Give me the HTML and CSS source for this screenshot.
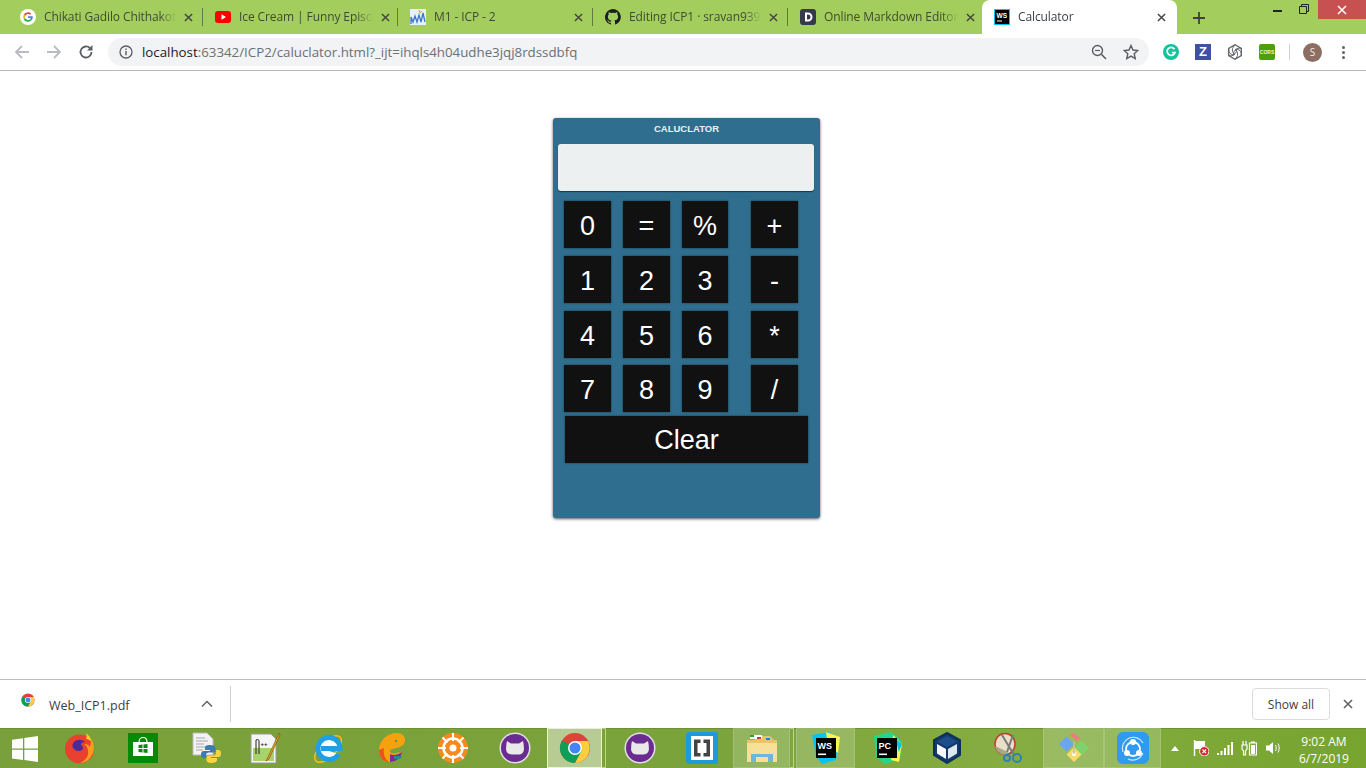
FILE: index.html
```html
<!DOCTYPE html>
<html lang="en">
<head>
  <meta charset="UTF-8">
  <title>Calculator</title>
  <link rel="stylesheet" href="styles.css">
</head>
<body>

  <svg class="defs" width="0" height="0">
    <symbol id="x" viewBox="0 0 10 10"><path d="M1 1l8 8M9 1l-8 8" fill="none" stroke="currentColor" stroke-width="1.6"/></symbol>
    <symbol id="chrome" viewBox="0 0 32 32">
      <circle cx="16" cy="16" r="15" fill="#db4437"/>
      <path d="M16 16L3 8.5A15 15 0 0 0 16 31l7.5-13z" fill="#0f9d58"/>
      <path d="M16 9h13a15 15 0 0 1-13 22l7-13z" fill="#ffcd40"/>
      <circle cx="16" cy="16" r="7" fill="#fff"/>
      <circle cx="16" cy="16" r="5.5" fill="#4285f4"/>
    </symbol>
    <symbol id="cat" viewBox="0 0 32 32">
      <circle cx="16" cy="16" r="15.5" fill="#e4dfe8"/>
      <circle cx="16" cy="16" r="14" fill="#6a2c91"/>
      <path d="M8 9l4 2.500h8l4-2.500c.6 2 .8 4 .8 6 .8 4.500-1.500 7.500-5.500 7.500h-6.600c-4 0-6.300-3-5.500-7.500 0-2 .2-4 .8-6z" fill="#e9e9e9"/>
    </symbol>
  </svg>

  <div class="tabstrip">
    <div class="tab">
      <svg class="favicon" viewBox="0 0 16 16"><circle cx="8" cy="8" r="8" fill="#fff"/><path d="M8 3.2a4.8 4.8 0 0 1 3.2 1.2l-1.2 1.3A3 3 0 0 0 5.2 7L3.7 5.8A4.8 4.8 0 0 1 8 3.2z" fill="#ea4335"/><path d="M3.7 5.8L5.2 7a3 3 0 0 0 0 2L3.7 10.200a4.800 4.800 0 0 1 0-4.400z" fill="#fbbc05"/><path d="M3.700 10.200L5.200 9a3 3 0 0 0 4.600 1.400l1.400 1.200A4.800 4.800 0 0 1 3.700 10.200z" fill="#34a853"/><path d="M12.800 8c0 1.500-.6 2.700-1.600 3.600L9.800 10.400c.5-.4.800-.8 1-1.400H8V7.200h4.700z" fill="#4285f4"/></svg>
      <span class="tab-title">Chikati Gadilo Chithakot</span>
      <svg class="tab-x"><use href="#x"/></svg>
    </div>
    <div class="tab">
      <svg class="favicon" viewBox="0 0 16 16"><rect y="2" width="16" height="12" rx="3" fill="#f00"/><path d="M6.500 5.200v5.600L11 8z" fill="#fff"/></svg>
      <span class="tab-title">Ice Cream | Funny Episo</span>
      <svg class="tab-x"><use href="#x"/></svg>
    </div>
    <div class="tab">
      <svg class="favicon" viewBox="0 0 16 16"><rect width="16" height="16" fill="#e8f0fa"/><path d="M1 15V8l2 5 2-6 2 6 2-7 2 7 2-9 2 9" fill="none" stroke="#3b78c9" stroke-width="1.300"/><path d="M9 1l1 3 2-2" fill="none" stroke="#e0a030"/></svg>
      <span class="tab-title">M1 - ICP - 2</span>
      <svg class="tab-x"><use href="#x"/></svg>
    </div>
    <div class="tab">
      <svg class="favicon" viewBox="0 0 16 16"><path d="M8 0a8 8 0 0 0-2.500 15.600c.4.100.5-.2.500-.4v-1.400c-2.200.5-2.700-1-2.700-1-.4-.9-.9-1.200-.9-1.200-.7-.5.100-.5.100-.5.800.1 1.200.8 1.200.8.700 1.200 1.900.9 2.300.7.100-.5.300-.9.500-1.100-1.800-.2-3.600-.9-3.600-4 0-.9.300-1.600.8-2.100-.1-.2-.4-1 .1-2.100 0 0 .7-.2 2.200.8a7.600 7.600 0 0 1 4 0c1.500-1 2.200-.8 2.200-.8.400 1.100.2 1.900.1 2.100.5.600.8 1.300.8 2.100 0 3.100-1.900 3.700-3.700 3.900.3.300.6.700.6 1.500v2.200c0 .2.100.5.600.4A8 8 0 0 0 8 0z" fill="#1b1f23"/></svg>
      <span class="tab-title">Editing ICP1 · sravan939</span>
      <svg class="tab-x"><use href="#x"/></svg>
    </div>
    <div class="tab tab-last">
      <svg class="favicon" viewBox="0 0 16 16"><rect width="16" height="16" rx="3" fill="#35394a"/><path d="M5 3.500h3a4.500 4.500 0 0 1 0 9H5zm2 2v5h1a2.500 2.500 0 0 0 0-5z" fill="#fff"/></svg>
      <span class="tab-title">Online Markdown Editor</span>
      <svg class="tab-x"><use href="#x"/></svg>
    </div>
    <div class="tab tab-active">
      <svg class="favicon" viewBox="0 0 16 16"><rect width="16" height="16" fill="#07c3f2"/><rect x="1" y="1" width="14" height="14" fill="#000"/><rect x="3" y="11.500" width="5" height="1" fill="#fff"/><text x="2.500" y="8.500" class="ws-mini">WS</text></svg>
      <span class="tab-title">Calculator</span>
      <svg class="tab-x"><use href="#x"/></svg>
    </div>
    <svg class="new-tab" viewBox="0 0 12 12"><path d="M6 0v12M0 6h12" stroke="#3c4043" stroke-width="1.800"/></svg>
    <div class="win-controls">
      <span class="win-min"></span>
      <svg class="win-restore" viewBox="0 0 10 10"><path d="M2.500 2.500V.5h7v7h-2M.5 2.500h7v7h-7z" fill="none" stroke="#222"/></svg>
      <span class="win-close"><svg viewBox="0 0 10 10"><path d="M1 1l8 8M9 1l-8 8" stroke="#fff" stroke-width="1.500"/></svg></span>
    </div>
  </div>

  <div class="toolbar">
    <svg class="nav-icon" viewBox="0 0 16 16"><path d="M15 8H2M8 2L2 8l6 6" fill="none" stroke="#b9bcc0" stroke-width="1.800"/></svg>
    <svg class="nav-icon" viewBox="0 0 16 16"><path d="M1 8h13M8 2l6 6-6 6" fill="none" stroke="#b9bcc0" stroke-width="1.800"/></svg>
    <svg class="nav-icon" viewBox="0 0 16 16"><path d="M13.500 8A5.500 5.500 0 1 1 12 4.200" fill="none" stroke="#5a5d61" stroke-width="1.800"/><path d="M14.500 1v5.500H9z" fill="#5a5d61"/></svg>
    <div class="omnibox">
      <svg class="omni-icon" viewBox="0 0 14 14"><circle cx="7" cy="7" r="6" fill="none" stroke="#5a5d61" stroke-width="1.300"/><path d="M7 6v4.200M7 3.600v1.400" stroke="#5a5d61" stroke-width="1.400"/></svg>
      <span class="url"><span class="url-host">localhost</span>:63342/ICP2/caluclator.html?_ijt=ihqls4h04udhe3jqj8rdssdbfq</span>
      <svg class="omni-zoom" viewBox="0 0 16 16"><circle cx="6.500" cy="6.500" r="5" fill="none" stroke="#5a5d61" stroke-width="1.400"/><path d="M10.300 10.300L15 15" stroke="#5a5d61" stroke-width="1.600"/><path d="M4 6.500h5" stroke="#5a5d61" stroke-width="1.200"/></svg>
      <svg class="omni-star" viewBox="0 0 16 16"><path d="M8 1.500l2 4.500 4.800.5-3.600 3.200 1 4.800L8 12.100l-4.200 2.400 1-4.800L1.200 6.500 6 6z" fill="none" stroke="#5a5d61" stroke-width="1.400"/></svg>
    </div>
    <div class="extensions">
      <svg class="ext" viewBox="0 0 16 16"><circle cx="8" cy="8" r="8" fill="#15c39a"/><path d="M11.500 5.200A4 4 0 1 0 12 8.500H8.800" fill="none" stroke="#fff" stroke-width="1.700"/></svg>
      <span class="ext ext-z">Z</span>
      <svg class="ext" viewBox="0 0 16 16"><path d="M8 .8l6.300 3.600v7.200L8 15.200l-6.300-3.600V4.400z" fill="none" stroke="#5f6368" stroke-width="1.300"/><path d="M8 .8C4.500 4 4.500 8 8 10.500M14.300 4.400C10 3.500 6.500 6 6.500 10.500M14.300 11.600C15 7.500 12 4.500 8 5.500M8 15.200c3.500-3 3.500-7 0-9.700M1.700 11.600c4.300 1 7.800-1.600 7.800-6M1.700 4.400C1 8.500 4 11.500 8 10.500" fill="none" stroke="#5f6368"/></svg>
      <span class="ext ext-cors">CORS</span>
      <span class="ext-sep"></span>
      <span class="avatar">S</span>
      <span class="dots"><i></i><i></i><i></i></span>
    </div>
  </div>

  <main class="page">
    <div class="calc">
      <h1 class="calc-title">Caluclator</h1>
      <div class="calc-display"></div>
      <div class="calc-keys">
        <button class="key">0</button>
        <button class="key">=</button>
        <button class="key key-narrow">%</button>
        <button class="key">+</button>
        <button class="key">1</button>
        <button class="key">2</button>
        <button class="key key-narrow">3</button>
        <button class="key">-</button>
        <button class="key">4</button>
        <button class="key">5</button>
        <button class="key key-narrow">6</button>
        <button class="key">*</button>
        <button class="key">7</button>
        <button class="key">8</button>
        <button class="key key-narrow">9</button>
        <button class="key">/</button>
      </div>
      <button class="key key-clear">Clear</button>
    </div>
  </main>

  <div class="download-bar">
    <div class="download-item">
      <svg class="download-icon"><use href="#chrome"/></svg>
      <span class="download-name">Web_ICP1.pdf</span>
      <svg class="download-caret" viewBox="0 0 12 8"><path d="M1 6.500l5-5 5 5" fill="none" stroke="#5f6368" stroke-width="1.500"/></svg>
    </div>
    <button class="show-all">Show all</button>
    <svg class="download-x"><use href="#x"/></svg>
  </div>

  <div class="taskbar">
    <div class="task">
      <svg class="task-win" viewBox="0 0 26 26"><path d="M0 3.700l11-1.500v10.300H0zM12.300 2L26 0v12.500H12.300zM0 13.800h11v10.300L0 22.500zM12.300 13.800H26V26l-13.700-1.900z" fill="#fff"/></svg>
    </div>
    <div class="task">
      <svg class="task-icon" viewBox="0 0 32 32"><circle cx="15.500" cy="17" r="14.500" fill="#e8412f"/><path d="M28 8c2.500 5 2.500 11 0 15-2.500 5-7 8-12 8 6-3 9-7 8-13-.5-3-2-5-4-6 3 0 5 1 6 3 .5-2 .5-5 2-7z" fill="#ff9a1f"/><path d="M22 1c2.500 2 5 5 6 9-2-2-4-3-6-3 1-2 1-4 0-6z" fill="#ffcb2e"/><path d="M10 10c3-3 8-3 11 0-3 0-4 1-4 3 2 1 3 3 1 5-3 2-7 1-9-2-1-2-.5-4 1-6z" fill="#4b2a9a"/></svg>
    </div>
    <div class="task">
      <svg class="task-icon task-store" viewBox="0 0 30 30"><rect width="30" height="30" fill="#038a09"/><path d="M5 9h20v14H5z" fill="#fff"/><path d="M11 9c0-6 8-6 8 0" fill="none" stroke="#fff" stroke-width="1.200"/><path d="M10.500 12l4-.5v3.500h-4zM15.500 11.500l4-.5v4h-4zM10.500 16h4v3.500l-4-.5zM15.500 16h4v4l-4-.5z" fill="#038a09"/></svg>
    </div>
    <div class="task">
      <svg class="task-icon" viewBox="0 0 32 32"><path d="M3 1h14l6 6v16H3z" fill="#f2f2f2" stroke="#bbb"/><path d="M6 6h9M6 9h12M6 12h8M6 15h10M6 18h7" stroke="#a9a9a9"/><path d="M20 13c-4 0-5 1-5 3v2h5v1h-6c-2 0-3 1-3 3.500S12 26 14 26h2v-3c0-1.500 1-2.500 3-2.500h4c1.500 0 2.500-1 2.500-2.500v-2c0-2-2-3-5.500-3z" fill="#3c7ab0"/><path d="M21 31c4 0 6-1 6-3v-2h-6v-1h7c2 0 3-1 3-3.500S30 18 28 18h-2v3c0 1.500-1 2.500-3 2.500h-4c-1.500 0-2.500 1-2.500 2.500v2c0 2 2 3 4.500 3z" fill="#ffd43b"/></svg>
    </div>
    <div class="task">
      <svg class="task-icon" viewBox="0 0 32 32"><path d="M2 2h20l5 5v24H2z" fill="#f5f5f5" stroke="#999"/><path d="M4 16h21v13H4z" fill="#a8d36a"/><path d="M7 8v14M7 8c2-1 3 0 3 1v13" fill="none" stroke="#222"/><text x="11.500" y="14" class="npp-mini">++</text><path d="M30 1L19 25l-2 4 3-2L31 3z" fill="#e9a320" stroke="#6b4a12" stroke-width=".6"/></svg>
    </div>
    <div class="task">
      <svg class="task-icon" viewBox="0 0 32 32"><ellipse cx="15" cy="17" rx="17" ry="8" transform="rotate(-45 15 17)" fill="none" stroke="#f0bf2a" stroke-width="1.500"/><path d="M25.500 22A11 11 0 1 1 27 16.500H8" fill="#fff" stroke="#1f9fe4" stroke-width="5"/></svg>
    </div>
    <div class="task">
      <svg class="task-icon" viewBox="0 0 32 32"><path d="M4 18C4 8 13 1 22 1c5 0 8 3 8 7 0 5-4 7-8 8-4 1-7 1-7 3 0 2 3 3 6 2l6-1c-1 6-6 10-12 10S4 26 4 18z" fill="#f6a20e"/><path d="M4 18c0 7 4 12 10 12-4-3-6-8-5-14z" fill="#e8531f"/><path d="M15 22c3 2 8 1 12-2-1 6-6 10-12 10z" fill="#7a2f98"/><path d="M19 24h8l-2 3h-6z" fill="#1d8d8f"/><circle cx="21" cy="9" r="1" fill="#1d8d8f"/></svg>
    </div>
    <div class="task">
      <svg class="task-icon" viewBox="0 0 32 32"><circle cx="16" cy="16" r="15" fill="#f58b1f"/><circle cx="16" cy="16" r="9.500" fill="none" stroke="#fff" stroke-width="2.500"/><circle cx="16" cy="16" r="3.500" fill="#fff"/><path d="M16 1v8M16 23v8M1 16h8M23 16h8M5.500 5.500l5 5M21.500 21.500l5 5M26.500 5.500l-5 5M10.500 21.500l-5 5" stroke="#fff" stroke-width="2"/></svg>
    </div>
    <div class="task">
      <svg class="task-icon"><use href="#cat"/></svg>
    </div>
    <div class="task task-open task-active task-stacked task-chrome">
      <svg class="task-icon"><use href="#chrome"/></svg>
    </div>
    <div class="task">
      <svg class="task-icon"><use href="#cat"/></svg>
    </div>
    <div class="task">
      <svg class="task-icon" viewBox="0 0 32 32"><rect width="32" height="32" rx="3" fill="#1e9ad6"/><rect x="5" y="4" width="22" height="24" fill="#fff"/><path d="M14.500 7.500H8v17h6.500v-3.500H11.500V11h3zM17.500 7.500H24v17h-6.500v-3.500h3V11h-3z" fill="#444"/></svg>
    </div>
    <div class="task task-open task-stacked task-explorer">
      <svg class="task-icon" viewBox="0 0 32 32"><path d="M1 8h8l1-4h14l4 4h3v22H1z" fill="#e9c46a"/><path d="M4 3h12v4H4z" fill="#fff"/><path d="M4 3h4v2H4z" fill="#2ba02b"/><path d="M11 5h4v2h-4z" fill="#d13438"/><path d="M20 6h4v2h-4z" fill="#0f8ad8"/><path d="M1 11h30v19H1z" fill="#f7e199"/><path d="M5 22h22v8h-5v-5H10v5H5z" fill="#6fb6dc"/></svg>
    </div>
    <div class="task task-open task-ws">
      <svg class="task-icon" viewBox="0 0 32 32"><path d="M2 3l17-3 10 6-3 22-14 4L6 24z" fill="#07c3f2"/><path d="M16 0l14 5-2 16-10-6z" fill="#fcf84a"/><rect x="6" y="6" width="20" height="20" fill="#000"/><text x="7.500" y="16.500" class="logo-mark">WS</text><rect x="8" y="21.500" width="8" height="1.600" fill="#fff"/></svg>
    </div>
    <div class="task">
      <svg class="task-icon" viewBox="0 0 32 32"><path d="M3 4l17-4 11 9-2 18-15 5-9-7z" fill="#21d789"/><path d="M22 3l9 9-3 18-8-2z" fill="#fcf84a"/><path d="M24 6l7 6-3 8z" fill="#07c3f2"/><rect x="6" y="6" width="20" height="20" fill="#000"/><text x="7.500" y="16.500" class="logo-mark">PC</text><rect x="8" y="21.500" width="8" height="1.600" fill="#fff"/></svg>
    </div>
    <div class="task">
      <svg class="task-icon" viewBox="0 0 32 32"><path d="M16 1l13 7v15l-13 8-13-8V8z" fill="#123a6b"/><path d="M16 4l10 5.500-10 5.500-10-5.500z" fill="#1d4f8c"/><path d="M6 12l9 5v10l-9-5.500z" fill="#f7f9fc"/><path d="M26 12l-9 5v10l9-5.500z" fill="#dfe7f0"/><path d="M16 1l13 7v15l-13 8-13-8V8z" fill="none" stroke="#0f3159" stroke-width="2"/></svg>
    </div>
    <div class="task">
      <svg class="task-icon" viewBox="0 0 32 32"><ellipse cx="11" cy="12" rx="10" ry="10.500" fill="#e8e0c8" stroke="#c23b32" stroke-width="1.500"/><path d="M1 14c1 6 6 9 11 9l2-3" fill="#a6a88a"/><path d="M8 3l12 20M19 3L13 20" stroke="#7a7a7a" stroke-width="2"/><circle cx="23" cy="26" r="4" fill="none" stroke="#2f7fb8" stroke-width="2"/><circle cx="13" cy="26" r="3" fill="none" stroke="#2f7fb8" stroke-width="2"/></svg>
    </div>
    <div class="task task-open">
      <svg class="task-icon" viewBox="0 0 32 32"><path d="M16 12l-7.500 7.500L1 12l7.500-7.500z" fill="#6aa5f0"/><path d="M16 16l7.500-7.500L31 16l-7.500 7.500z" fill="#7fd36a"/><path d="M8.500 22.500L16 15l7.500 7.500L16 30z" fill="#f7dc6b"/><path d="M12 3l3-2 7 5-3 3z" fill="#f27a7a"/><circle cx="16" cy="22" r="2" fill="#fff"/><path d="M16 22V10" stroke="#c9c0a0" stroke-width="1.500"/></svg>
    </div>
    <div class="task task-open task-share">
      <svg class="task-icon" viewBox="0 0 32 32"><rect width="32" height="32" rx="6" fill="#2f9bf0"/><path d="M6 20A11 11 0 0 1 26 11M26 21a11 11 0 0 1-15 6" fill="none" stroke="#cfe8fd" stroke-width="1.200"/><circle cx="16" cy="17" r="7" fill="none" stroke="#fff" stroke-width="1.800"/><circle cx="16" cy="10" r="3" fill="#fff"/><circle cx="10" cy="21" r="3" fill="#fff"/><circle cx="22" cy="21" r="3" fill="#fff"/></svg>
    </div>

    <div class="tray">
      <svg class="tray-caret" viewBox="0 0 8 5"><path d="M4 0l4 5H0z" fill="#fff"/></svg>
      <svg class="tray-icon" viewBox="0 0 16 16"><path d="M1.500 0v16" stroke="#fff" stroke-width="1.400"/><path d="M2 1h10v8H2z" fill="#fff"/><circle cx="11.300" cy="11.300" r="4.700" fill="#d9252a" stroke="#fff"/><path d="M9.500 9.500l3.600 3.600M13.100 9.500l-3.600 3.600" stroke="#fff" stroke-width="1.200"/></svg>
      <svg class="tray-icon" viewBox="0 0 16 16"><path d="M0 13h2v2H0zM3.500 11h2v4h-2zM7 8h2v7H7zM10.500 5h2v10h-2zM14 2h2v13h-2z" fill="#fff"/></svg>
      <svg class="tray-icon" viewBox="0 0 16 16"><path d="M1 5h5v4l-1.500 2v4h-2v-4L1 9zM2 1v4M5 1v4" fill="none" stroke="#fff" stroke-width="1.200"/><path d="M8.500 3h7v12h-7z" fill="none" stroke="#fff" stroke-width="1.200"/><path d="M10 1.500h4V3h-4z" fill="#fff"/><path d="M10 5h4v9h-4z" fill="#fff"/></svg>
      <svg class="tray-icon" viewBox="0 0 16 16"><path d="M1 5.500h3L8 2v12L4 10.500H1z" fill="#fff"/><path d="M10.500 5c1 2 1 4 0 6M13 3.500c1.600 3 1.600 6 0 9" fill="none" stroke="#fff"/></svg>
      <div class="clock">
        <span>9:02 AM</span>
        <span>6/7/2019</span>
      </div>
    </div>
  </div>

</body>
</html>
```

FILE: styles.css
```css
body {
  margin: 0;
  height: 768px;
  overflow: hidden;
  display: flex;
  flex-direction: column;
  background-color: #fff;
  font-family: "Open Sans", "Noto Sans", sans-serif;
  color: #3c4043;
}

.defs {
  position: absolute;
}

/* tab strip */
.tabstrip {
  height: 34px;
  display: flex;
  align-items: center;
  padding-left: 8px;
  background-color: #a3ce5e;
  flex-shrink: 0;
}

.tab {
  width: 195px;
  height: 34px;
  box-sizing: border-box;
  display: flex;
  align-items: center;
  padding: 0 10px 0 12px;
  position: relative;
}

.tab::after {
  content: "";
  position: absolute;
  right: 0;
  top: 8px;
  height: 18px;
  width: 1px;
  background-color: #5f7a3a;
}

.tab-last::after,
.tab-active::after {
  display: none;
}

.tab-active {
  background-color: #fff;
  border-radius: 8px 8px 0 0;
  margin-left: -1px;
  padding-right: 11px;
}

.favicon {
  width: 16px;
  height: 16px;
  flex-shrink: 0;
}

.ws-mini {
  font: bold 6.500px "Liberation Sans", sans-serif;
  fill: #fff;
}

.tab-title {
  flex: 1;
  margin: -1px 0 0 8px;
  font-size: 12px;
  letter-spacing: -0.1px;
  color: #3f4a33;
  white-space: nowrap;
  -webkit-mask-image: linear-gradient(to right, #000 88%, transparent);
  mask-image: linear-gradient(to right, #000 88%, transparent);
}

.tab-active .tab-title {
  color: #3c4043;
}

.tab-x {
  width: 9px;
  height: 9px;
  margin-left: 8px;
  color: #444;
  flex-shrink: 0;
}

.new-tab {
  width: 12px;
  height: 12px;
  margin-left: 16px;
  margin-top: 1px;
}

.win-controls {
  margin-left: auto;
  align-self: flex-start;
  display: flex;
  align-items: flex-start;
}

.win-min {
  width: 9px;
  height: 2px;
  margin-top: 10px;
  background-color: #222;
}

.win-restore {
  width: 10px;
  height: 10px;
  margin: 4px 9px 0 17px;
}

.win-close {
  width: 48px;
  height: 19px;
  display: flex;
  align-items: center;
  justify-content: center;
  background-color: #c75050;
}

.win-close svg {
  width: 10px;
  height: 10px;
}

/* address bar */
.toolbar {
  height: 36px;
  display: flex;
  align-items: center;
  padding-left: 14px;
  border-bottom: 1px solid #b8b8b8;
  flex-shrink: 0;
}

.nav-icon {
  width: 16px;
  height: 16px;
  margin-right: 16px;
}

.omnibox {
  width: 1041px;
  height: 28px;
  margin-left: -2px;
  display: flex;
  align-items: center;
  padding: 0 10px 0 11px;
  box-sizing: border-box;
  background-color: #f1f3f4;
  border-radius: 14px;
}

.omni-icon {
  width: 14px;
  height: 14px;
}

.url {
  flex: 1;
  margin-left: 9px;
  font-size: 13.300px;
  color: #6b7076;
  white-space: nowrap;
}

.url-host {
  color: #202124;
}

.omni-zoom,
.omni-star {
  width: 16px;
  height: 16px;
}

.omni-star {
  margin-left: 16px;
}

.extensions {
  display: flex;
  align-items: center;
  margin-left: 14px;
}

.ext {
  width: 16px;
  height: 16px;
  margin-right: 16px;
  flex-shrink: 0;
}

.ext-z {
  background-color: #3f51a5;
  color: #fff;
  font: bold 13px/16px "Liberation Sans", sans-serif;
  text-align: center;
}

.ext-cors {
  background-color: #4f9f0a;
  color: #e8f5d8;
  font: bold 5px/16px "Liberation Sans", sans-serif;
  text-align: center;
  border-radius: 2px;
}

.ext-sep {
  width: 1px;
  height: 16px;
  background-color: #d0d0d0;
  margin-left: -2px;
  margin-right: 13px;
}

.avatar {
  width: 19px;
  height: 19px;
  border-radius: 50%;
  background-color: #8d6e63;
  color: #f3ece8;
  font-size: 10px;
  line-height: 19px;
  text-align: center;
}

.dots {
  margin-left: 20px;
  display: flex;
  flex-direction: column;
  gap: 2px;
}

.dots i {
  display: block;
  width: 3px;
  height: 3px;
  border-radius: 50%;
  background-color: #5f6368;
}

/* calculator */
.page {
  flex: 1;
  padding: 47px 0 0 553px;
}

.calc {
  width: 267px;
  height: 400px;
  box-sizing: border-box;
  padding: 5px;
  background-color: #2f6e8e;
  border-radius: 3px;
  box-shadow: 0 1px 3px rgba(0, 0, 0, 0.65);
}

.calc-title {
  margin: 0;
  height: 21px;
  font: bold 9.500px/12px "Liberation Sans", Arial, sans-serif;
  text-align: center;
  text-transform: uppercase;
  color: #ecf0f1;
}

.calc-display {
  width: 256px;
  height: 47px;
  background-color: #ecf0f1;
  border-radius: 3px;
  box-shadow: 0 1px 1px rgba(0, 0, 0, 0.5);
}

.calc-keys {
  display: grid;
  grid-template-columns: 59px 59px 69px 47px;
  grid-template-rows: 55px 55px 54px 47px;
  margin: 10px 0 0 6px;
}

.key {
  width: 47px;
  height: 47px;
  padding: 3px 0 0;
  border: none;
  background-color: #111;
  color: #fff;
  font: 27px "Liberation Sans", Arial, sans-serif;
  box-shadow: 0 0 2px rgba(0, 0, 0, 0.5);
}

.key-narrow {
  width: 46px;
}

.key-clear {
  display: block;
  width: 243px;
  padding-top: 1px;
  margin: 4px 0 0 7px;
}

/* downloads */
.download-bar {
  height: 48px;
  display: flex;
  align-items: center;
  border-top: 1px solid #bdbdbd;
  flex-shrink: 0;
}

.download-item {
  width: 231px;
  height: 36px;
  box-sizing: border-box;
  display: flex;
  align-items: center;
  padding-left: 21px;
  border-right: 1px solid #d0d0d0;
}

.download-icon {
  width: 14px;
  height: 14px;
  margin-top: -8px;
}

.download-name {
  margin: 3px 0 0 14px;
  font-size: 12.500px;
  color: #3c4043;
}

.download-caret {
  width: 12px;
  height: 8px;
  margin-left: auto;
  margin-right: 17px;
}

.show-all {
  margin-left: auto;
  width: 78px;
  height: 32px;
  padding: 0;
  background-color: #fff;
  border: 1px solid #dadce0;
  border-radius: 4px;
  font: 12px "Open Sans", sans-serif;
  color: #3c4043;
}

.download-x {
  width: 10px;
  height: 10px;
  margin: 0 13px;
  color: #5f6368;
}

/* windows taskbar */
.taskbar {
  height: 40px;
  display: grid;
  grid-template-columns: 50px 60px 66px 60px 58px 70px 54px 70px 54px 64px 68px 56px 64px 63px 60px 60px 66px 61px 57px 1fr;
  background: linear-gradient(to right, #79a03a 0%, #7ba33c 50%, #86ad42 74%, #76a42e 100%);
  box-shadow: inset 0 1px 0 #6b9230;
  flex-shrink: 0;
}

.task {
  display: flex;
  align-items: center;
  justify-content: center;
  position: relative;
  box-sizing: border-box;
}

.task-icon {
  width: 32px;
  height: 32px;
}

.task-win {
  width: 26px;
  height: 26px;
  margin-top: 1px;
}

.task-store {
  width: 30px;
  height: 30px;
}

.task-open {
  background-color: rgba(255, 255, 255, 0.18);
  border: 1px solid rgba(255, 255, 255, 0.3);
  background-clip: padding-box;
}

.task-active {
  background-color: rgba(255, 255, 255, 0.45);
  border-color: rgba(255, 255, 255, 0.85);
}

.task-chrome {
  margin: 0 4px 0 5px;
}

.task-explorer {
  margin: 0 4px 0 3px;
}

.task-ws {
  margin: 0 2px;
}

.task-share {
  margin-right: 0;
}

.logo-mark {
  font: bold 9px "Liberation Sans", sans-serif;
  fill: #fff;
}

.npp-mini {
  font: bold 6px "Liberation Sans", sans-serif;
  fill: #222;
}

/* second window edge on grouped buttons */
.task-stacked::after {
  content: "";
  position: absolute;
  top: -1px;
  bottom: -1px;
  right: -5px;
  width: 3px;
  border: 1px solid rgba(255, 255, 255, 0.5);
  border-left: none;
}

.tray {
  display: flex;
  align-items: center;
  padding-left: 10px;
}

.tray-caret {
  width: 8px;
  height: 5px;
  margin-right: 14px;
}

.tray-icon {
  width: 16px;
  height: 16px;
  margin-right: 8px;
}

.clock {
  margin: 3px 0 0 10px;
  display: flex;
  flex-direction: column;
  align-items: center;
  font-size: 12px;
  line-height: 17px;
  color: #fff;
}
```
